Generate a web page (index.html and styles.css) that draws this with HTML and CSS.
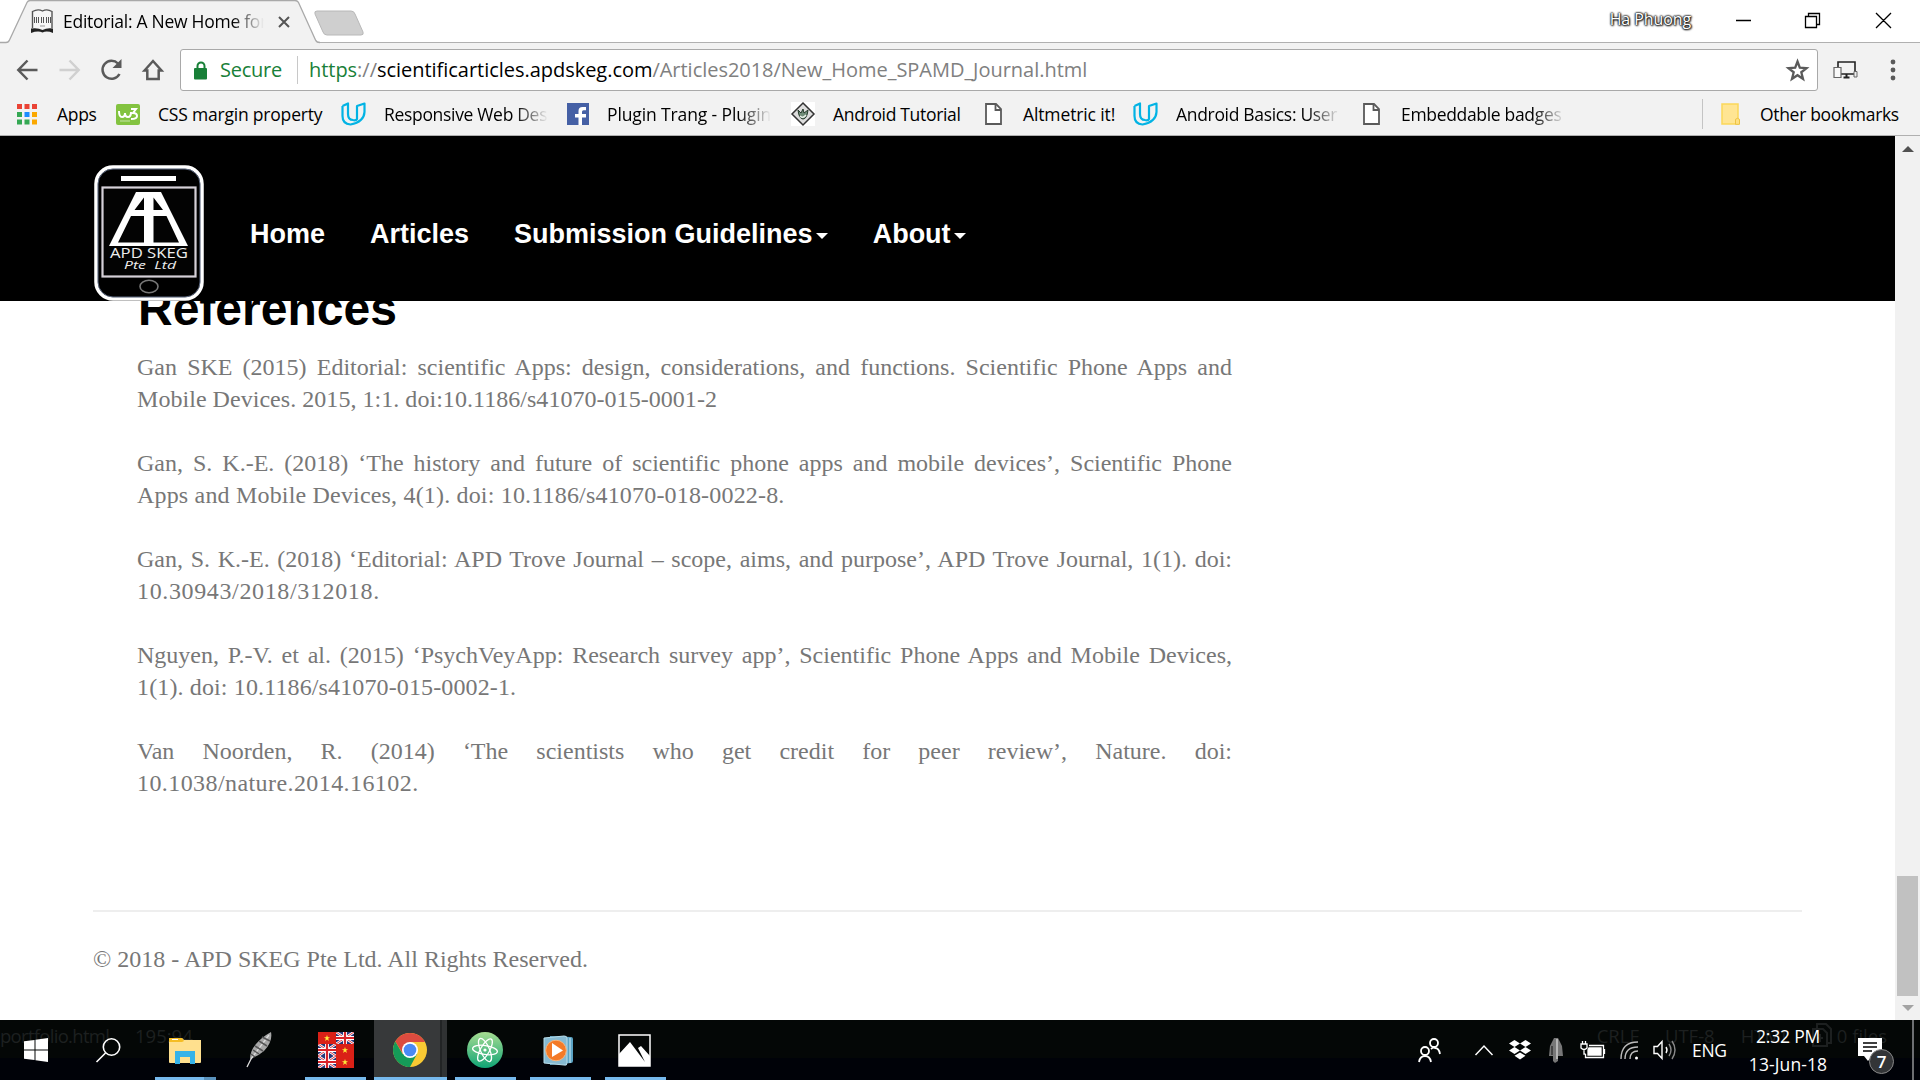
FILE: index.html
```html
<!DOCTYPE html>
<html lang="en">
<head>
<meta charset="utf-8">
<title>Editorial: A New Home for SPAMD</title>
<link rel="stylesheet" href="styles.css">
</head>
<body>
<svg width="0" height="0" class="defs">
  <symbol id="doc" viewBox="0 0 17 22"><path d="M1 1h10l5 5v15H1z" fill="#fff" stroke="#5a5a5a" stroke-width="1.8"/><path d="M10.5 1v6H16" fill="none" stroke="#5a5a5a" stroke-width="1.8"/></symbol>
  <symbol id="udacity" viewBox="0 0 25 24"><path d="M1.500 4 7 1.500V12q0 6 5 6M1.500 4v10q0 8 8 8.500Q23 20 23.500 10V1.500L16 4v13Q15 19 12 18" fill="none" stroke="#02b3e4" stroke-width="2.200" stroke-linejoin="round"/></symbol>
  <symbol id="uk" viewBox="0 0 18 12" preserveAspectRatio="none"><path d="M0 0h18v12H0z" fill="#24377b"/><path d="m0 0 18 12M18 0 0 12" stroke="#fff" stroke-width="2.600"/><path d="m0 0 18 12M18 0 0 12" stroke="#d8232a" stroke-width=".9"/><path d="M9 0v12M0 6h18" stroke="#fff" stroke-width="4"/><path d="M9 0v12M0 6h18" stroke="#d8232a" stroke-width="2.200"/></symbol>
  <symbol id="vn" viewBox="0 0 18 12"><path d="M0 0h18v12H0z" fill="#da2017"/><path d="m9 3 .8 2.200h2.300l-1.900 1.400.7 2.300L9 7.500 7.100 8.900l.7-2.300-1.900-1.400h2.300z" fill="#ffeb3b"/></symbol>
</svg>

<header class="chrome">
  <div class="titlebar">
    <div class="tab">
      <svg class="tab-shape" width="320" height="43" viewBox="0 0 320 43"><path d="M0 42.500H8L28 1.500Q28.500.5 30 .5H296Q297.500.5 298 1.500L317 42.500H320V43H0z" fill="#f2f2f2"/><path d="M0 42.500H6Q8.500 42.500 9.500 40L27 2.500Q28 .5 30 .5H295Q297.500.5 298.500 2.500L315.500 40Q316.500 42.500 320 42.500" fill="none" stroke="#a9a9a9" stroke-width="1.300"/></svg>
      <svg class="favicon" width="23" height="24" viewBox="0 0 23 24"><path d="M1.500 19V2.500Q7-.5 11.500 2 16-.5 21 2.500V19" fill="#f6f6f6" stroke="#555" stroke-width="1.400"/><path d="M0 19.500Q7 18.500 11.500 21 16 18.500 22 19.500V24Q16 21.500 11.500 23.500 7 21.500 0 24z" fill="#222"/><path d="M3.500 8v6m2-6v6m2-6v6m3-6v6m2-6v6m3-6v6m2-6v6m2-6v6" stroke="#555"/><path d="M9 17h5" stroke="#999"/></svg>
      <span class="tab-title fade">Editorial: A New Home for</span>
      <svg class="tab-close" width="12" height="12" viewBox="0 0 12 12"><path d="m1 1 10 10M11 1 1 11" stroke="#555" stroke-width="2"/></svg>
    </div>
    <svg class="newtab" width="52" height="27" viewBox="0 0 52 27"><path d="M3 1h34q3 0 4 3l8 18q1 3-2 3H13q-3 0-4-3L1 4Q0 1 3 1z" fill="#cfcfcf" stroke="#b8b8b8"/></svg>
    <span class="profile">Ha Phuong</span>
    <svg class="winctl" width="154" height="20" viewBox="0 0 154 20" fill="none" stroke="#000" stroke-width="1.300"><path d="M0 10.500h15M69.500 6.500h11v11h-11zM72.500 6.500v-3h11v11h-3M140 3l15 15M155 3l-15 15"/></svg>
  </div>
  <div class="toolbar">
    <svg class="navicons" width="150" height="26" viewBox="0 0 150 26" fill="none" stroke="#5a5a5a" stroke-width="2.500"><path d="M20.500 13H2M10.500 3.500 1.300 13 10.500 22.500"/><path d="M42.500 13h19M52.500 3.500 61.700 13 52.500 22.500" stroke="#d0d0d0"/><path d="M102.500 17A9 9 0 1 1 101 6.500"/><path d="M104.500 2v9h-9z" fill="#5a5a5a" stroke="none"/><path d="M127.500 13.500 136 4l8.500 9.500h-2.800V22h-11.400v-8.500z"/></svg>
    <div class="omnibox">
      <svg width="14" height="19" viewBox="0 0 14 19"><path d="M3.500 8V5a3.500 3.500 0 0 1 7 0v3" fill="none" stroke="#188038" stroke-width="2"/><rect y="7" width="13" height="11.500" rx="1" fill="#188038"/></svg>
      <span class="secure">Secure</span>
      <span class="url"><i class="scheme">https</i>://<b>scientificarticles.apdskeg.com</b>/Articles2018/New_Home_SPAMD_Journal.html</span>
      <svg class="star" width="23" height="22" viewBox="0 0 23 22"><path d="m11.500 2.500 2.300 6.200 6.700.4-5.200 4.200 1.700 6.500-5.500-3.600-5.500 3.600 1.700-6.500-5.200-4.200 6.700-.4z" fill="none" stroke="#5a5a5a" stroke-width="2.300"/></svg>
    </div>
    <svg class="device" width="25" height="20" viewBox="0 0 25 20" fill="none" stroke="#222" stroke-width="1.600"><path d="M5 7V2h17v12H8"/><path d="M13.500 14v3m-3 .5h6" stroke-width="2"/><path d="M1 7.500h7v10H1z" stroke="#666" fill="#fafafa" stroke-width="1.200"/><path d="M21 11.500h3v5.500h-3z" fill="#eee" stroke="#666"  stroke-width="1"/></svg>
    <svg class="menu" width="6" height="22" viewBox="0 0 6 22" fill="#5a5a5a"><circle cx="3" cy="3" r="2.400"/><circle cx="3" cy="11" r="2.400"/><circle cx="3" cy="19" r="2.400"/></svg>
  </div>
  <nav class="bookmarks">
    <a class="bm"><svg width="22" height="21" viewBox="0 0 22 21"><path d="M0 0h5v5H0zm7.500 0h5v5h-5zM15 0h5v5h-5z" fill="#ea4335"/><path d="M0 8h5v5H0zm0 7.500h5v5H0zm7.500 0h5v5h-5z" fill="#34a853"/><path d="M7.500 8h5v5h-5z" fill="#1a8cff"/><path d="M15 8h5v5h-5zm0 7.500h5v5h-5z" fill="#fba800"/></svg><span>Apps</span></a>
    <a class="bm"><svg width="24" height="21" viewBox="0 0 24 21"><rect width="24" height="21" rx="2" fill="#83c340"/><path d="M3 7q0 6 3 6t3-4q0 4 3 4t3-5m0-3h5l-3 4q4 0 4 3t-6 3" fill="none" stroke="#fff" stroke-width="2"/><path d="M4 17h10" stroke="#c8e6a8"/></svg><span class="css">CSS margin property</span></a>
    <a class="bm"><svg width="25" height="24"><use href="#udacity"/></svg><span class="fade">Responsive Web Design</span></a>
    <a class="bm"><svg width="22" height="22" viewBox="0 0 22 22"><path d="M0 0h22v22H0z" fill="#4560a5"/><path d="M11.500 22v-7.500H8V11h3.500V8q0-4 4-4H19v3.200h-2.500q-1.500 0-1.500 1.500V11h4v3.500h-4V22z" fill="#fff"/></svg><span class="fade fb">Plugin Trang - Plugin cho</span></a>
    <a class="bm"><svg width="24" height="24" viewBox="0 0 24 24"><path d="M0 0h24v24H0z" fill="#fff"/><path d="M12 1 23 12 12 23 1 12z" fill="#ddd" stroke="#333" stroke-width="1.500"/><path d="M7 8q1 9 5 9t5-9l-4 3-1-4-2 4z" fill="#6f8c77" stroke="#263a2b"/><path d="M9 14q3 3 6-1" fill="none" stroke="#e8f0e8" stroke-width="1.500"/></svg><span>Android Tutorial</span></a>
    <a class="bm d"><svg width="17" height="22"><use href="#doc"/></svg><span class="alt">Altmetric it!</span></a>
    <a class="bm"><svg width="25" height="24"><use href="#udacity"/></svg><span class="fade">Android Basics: User Int</span></a>
    <a class="bm d"><svg width="17" height="22"><use href="#doc"/></svg><span class="fade">Embeddable badges for</span></a>
    <a class="bm other"><svg width="20" height="22" viewBox="0 0 20 22"><path d="M1 1h16v20H1z" fill="#ffe593" stroke="#fbd75a" stroke-width="1.500"/><path d="M14.500 21.300v-5q2-2 4 0v5z" fill="#ffe082" stroke="#edc343"/></svg><span>Other bookmarks</span></a>
  </nav>
</header>

<div class="viewport">
  <div class="page">
    <div class="site-header">
      <svg class="logo" width="110" height="136" viewBox="0 0 110 136">
        <rect x="2" y="2" width="106" height="132" rx="17" fill="#000" stroke="#fff" stroke-width="3.500"/>
        <rect x="4" y="4" width="102" height="128" rx="15" fill="none" stroke="#7786a5" stroke-width=".8"/>
        <path d="M27 11h55v5H27z" fill="#fff"/>
        <rect x="8.500" y="22.500" width="93" height="89" fill="#030303" stroke="#d5d0d8" stroke-width="2.200"/>
        <path fill="#fff" fill-rule="evenodd" d="M42 27h25l27 54H15zM50 32.500 40.500 45H50zM59.500 32.500V45H69zM37 51 24 77.500h26V51zM59.500 51v26.500H85L72.500 51z"/>
        <text x="16" y="92.500" textLength="78" lengthAdjust="spacingAndGlyphs" font-size="14.500">APD SKEG</text>
        <text x="30" y="104" textLength="52" lengthAdjust="spacingAndGlyphs" font-size="11" font-style="italic">Pte&#160; Ltd</text>
        <ellipse cx="55" cy="121.500" rx="9" ry="6.200" fill="none" stroke="#777" stroke-width="1.600"/>
      </svg>
      <nav class="site-nav"><a>Home</a><a>Articles</a><a>Submission Guidelines<i class="caret"></i></a><a>About<i class="caret"></i></a></nav>
    </div>
    <main class="article">
      <h2>References</h2>
      <p><span class="full">Gan SKE (2015) Editorial: scientific Apps: design, considerations, and functions. Scientific Phone Apps and</span><span class="last gan-2015">Mobile Devices. 2015, 1:1. doi:10.1186/s41070-015-0001-2</span></p>
      <p><span class="full">Gan, S. K.-E. (2018) ‘The history and future of scientific phone apps and mobile devices’, Scientific Phone</span><span class="last history">Apps and Mobile Devices, 4(1). doi: 10.1186/s41070-018-0022-8.</span></p>
      <p><span class="full">Gan, S. K.-E. (2018) ‘Editorial: APD Trove Journal – scope, aims, and purpose’, APD Trove Journal, 1(1). doi:</span><span class="last trove">10.30943/2018/312018.</span></p>
      <p><span class="full">Nguyen, P.-V. et al. (2015) ‘PsychVeyApp: Research survey app’, Scientific Phone Apps and Mobile Devices,</span><span class="last nguyen">1(1). doi: 10.1186/s41070-015-0002-1.</span></p>
      <p><span class="full">Van Noorden, R. (2014) ‘The scientists who get credit for peer review’, Nature. doi:</span><span class="last noorden">10.1038/nature.2014.16102.</span></p>
    </main>
    <footer class="site-footer">© 2018 - APD SKEG Pte Ltd. All Rights Reserved.</footer>
  </div>
  <div class="scrollbar"><i class="up"></i><i class="thumb"></i><i class="down"></i></div>
</div>

<div class="taskbar">
  <div class="ghost"><span>portfolio.html</span><span>195:94</span><span class="g-right">CRLF</span><span>UTF-8</span><span>HTML</span><svg width="20" height="24" viewBox="0 0 20 24" fill="none" stroke="#1d2020" stroke-width="2"><path d="M1 6h10l4 4v13H1zM5 6V1h9l5 5v14h-4M8 11v8m-3-4h6"/></svg><span>0 files</span></div>
  <div class="apps">
    <div class="app start"><svg width="24" height="24" viewBox="0 0 24 24" fill="#fff"><path d="M0 3.300 10.500 2v9.500H0zM11.500 1.800 24 0v11.500H11.500zM0 12.500h10.500V22L0 20.700zM11.500 12.500H24V24l-12.500-1.800z"/></svg></div>
    <div class="app search"><svg width="25" height="25" viewBox="0 0 25 25" fill="none" stroke="#fff" stroke-width="1.600"><circle cx="15.500" cy="9" r="8.200"/><path d="M9.500 15 .5 24"/></svg></div>
    <div class="app open split"><svg width="32" height="27" viewBox="0 0 32 27"><path d="M0 2q0-1 1-1h12l2 2h17v22q0 1-1 1H1q-1 0-1-1z" fill="#ffe08e"/><path d="M1 1h12l2 3-2 1H0V2z" fill="#f5bd24"/><path d="M3 2.500h6" stroke="#fff"/><path d="M6 27V14h20v13h-5v-7H11v7z" fill="#36b3e8"/></svg></div>
    <div class="app quill"><svg width="26" height="36" viewBox="0 0 26 36"><path d="M25 0q2 10-7 19-6 5-12 7l-2 1q0-8 6-15T25 0z" fill="#a7a7a7"/><path d="M23 3 5 27 1 35" fill="none" stroke="#ddd" stroke-width="1.300"/><path d="m7 18 6 4M9 14l8 5M13 9l8 5m-5-9 8 4M5 22l4 3" stroke="#565656" stroke-width="1.500"/></svg></div>
    <div class="app open"><svg width="36" height="36" viewBox="0 0 36 36"><use href="#vn" width="18" height="12"/><use href="#uk" x="18" width="18" height="12"/><use href="#uk" y="12" width="18" height="12"/><use href="#vn" x="18" y="12" width="18" height="12"/><use href="#uk" y="24" width="18" height="12"/><use href="#vn" x="18" y="24" width="18" height="12"/></svg></div>
    <div class="app open active"><svg width="34" height="34" viewBox="0 0 34 34"><circle cx="17" cy="17" r="17" fill="#f8c933"/><path d="M2.300 8.500A17 17 0 0 1 31.700 8.500L32 9H17L10 21z" fill="#db4b3f"/><path d="M2.300 8.500A17 17 0 0 0 17 34l7-13-14.400 0z" fill="#159b58"/><circle cx="17" cy="17" r="8" fill="#fff"/><circle cx="17" cy="17" r="6.300" fill="#4a8af4"/></svg></div>
    <div class="app open nudge"><svg width="36" height="36" viewBox="0 0 36 36"><defs><linearGradient id="atom" x2="0" y2="1"><stop stop-color="#a7dc91"/><stop offset="1" stop-color="#10a576"/></linearGradient></defs><circle cx="18" cy="18" r="18" fill="url(#atom)"/><g fill="none" stroke="#fff" stroke-width="1.300"><ellipse cx="18" cy="18" rx="12.500" ry="4.500" transform="rotate(8 18 18)"/><ellipse cx="18" cy="18" rx="12.500" ry="4.500" transform="rotate(66 18 18)"/><ellipse cx="18" cy="18" rx="12.500" ry="4.500" transform="rotate(120 18 18)"/></g><circle cx="18" cy="18" r="1.600" fill="#fff"/></svg></div>
    <div class="app open quill"><svg width="30" height="31" viewBox="0 0 30 31"><path d="m6 1 21 1q2 0 2 2v22q0 2-2 2L6 30z" fill="#5ba3c4"/><path d="M26 3v25" stroke="#d5edf7"/><path d="m0 3 20-2q3 0 3 2v25q0 3-3 2L0 28z" fill="#86bad2" stroke="#b9ddea"/><circle cx="12" cy="15.500" r="10.300" fill="#f47a27" stroke="#f9b47a"/><path d="m8 8 11 7.500L8 22z" fill="#fff"/></svg></div>
    <div class="app open nudge"><svg width="33" height="33" viewBox="0 0 33 33"><path d="M1 1h31v31H1z" fill="none" stroke="#fff" stroke-width="1.500"/><path d="M1 20 12 8l15 20-7-14 3-2 9 10v10H1z" fill="#fff"/></svg></div>
  </div>
  <div class="tray">
    <svg width="24" height="24" viewBox="0 0 24 24" fill="none" stroke="#fff" stroke-width="1.800"><circle cx="16" cy="5" r="4"/><circle cx="7" cy="13" r="4"/><path d="M1 24q1-6 6-6t6 6M13 11q2-2 4-1 4 0 5 6"/></svg>
    <svg class="t-caret" width="18" height="12" viewBox="0 0 18 12"><path d="m.5 11 8.500-9 8.500 9" fill="none" stroke="#fff" stroke-width="1.500"/></svg>
    <svg class="t-drop" width="22" height="20" viewBox="0 0 22 20" fill="#fff"><path d="m5.500 0 5.500 3.500L5.500 7 0 3.500zM16.500 0 22 3.500 16.500 7 11 3.500zM5.500 7 11 10.500 5.500 14 0 10.500zM16.500 7 22 10.500 16.500 14 11 10.500zM11 12.500l5.500 3.300L11 19.500l-5.500-3.700z"/></svg>
    <svg class="t-pen" width="14" height="25" viewBox="0 0 14 25"><path d="M5 0h4l4 8 1 10H9v5l-3 2-2-2v-5H0L1 8z" fill="#777"/><path d="M8 1v20" stroke="#b5b5b5" stroke-width="2"/><path d="M3 8v9" stroke="#444" stroke-width="2"/></svg>
    <svg class="t-bat" width="25" height="18" viewBox="0 0 25 18" fill="none" stroke="#fff" stroke-width="1.300"><path d="M9 4.500h14.500v12H5.500V13M24.500 8v5M1 3h6v4q-3 3-6 0zM2.500 0v3m3-3v3M4 9v4h1.500"/><path d="M9 7h12v7H8V9z" fill="#fff"/></svg>
    <svg class="t-wifi" width="19" height="19" viewBox="0 0 19 19" fill="none" stroke="#bbb" stroke-width="1.400"><path d="M1 18Q1 1 18 1M5 18Q5 6 18 6M10 18q0-8 8-8"/><circle cx="16.500" cy="17" r="1.500" fill="#fff" stroke="none"/></svg>
    <svg class="t-vol" width="23" height="20" viewBox="0 0 23 20" fill="none" stroke="#fff" stroke-width="1.400"><path d="M1 6.500h3.500L9 1.500v17l-4.500-5H1zM13 7q2 3 0 6"/><path d="M16 4q4 6 0 12M19 1q6 9 0 18" stroke="#888"/></svg>
    <span class="lang">ENG</span>
    <div class="clock"><span>2:32 PM</span><span class="date">13-Jun-18</span></div>
    <svg class="t-note" width="38" height="38" viewBox="0 0 38 38"><path d="M0 1h24v18H14l-4 5-4-5H0z" fill="#fff"/><path d="M5 6h14M5 10h14M5 14h9" stroke="#000" stroke-width="1.400"/><circle cx="23.500" cy="24.500" r="12" fill="#333537" stroke="#888"/><text x="23.500" y="30.500" text-anchor="middle" font-size="17" font-weight="600">7</text></svg>
    <i class="peek"></i>
  </div>
</div>
</body>
</html>
```
FILE: styles.css
```css
* { box-sizing: border-box; }
body { margin: 0; width: 1920px; height: 1080px; overflow: hidden; background: #fff; font-family: "Open Sans", "Noto Sans", sans-serif; font-size: 17.5px; letter-spacing: -.32px; color: #000; display: flex; flex-direction: column; }
svg { flex: none; display: block; overflow: visible; }
i { font-style: normal; }
.defs { position: absolute; }
.fade { overflow: hidden; white-space: nowrap; -webkit-mask-image: linear-gradient(to left, transparent, #000 32px); mask-image: linear-gradient(to left, transparent, #000 32px); }

/* browser frame */
.chrome { height: 136px; flex: none; background: #f2f2f2; border-bottom: 1px solid #b0b0b0; }
.titlebar { height: 43px; background: #fff; border-bottom: 1px solid #b0b0b0; display: flex; align-items: flex-start; }
.tab { width: 320px; height: 43px; position: relative; display: flex; align-items: flex-start; padding-left: 31px; flex: none; }
.tab-shape { position: absolute; left: 0; top: 0; }
.favicon, .tab-title, .tab-close { position: relative; }
.favicon { margin-top: 9px; }
.tab-title { width: 201px; margin: 9px 0 0 9px; line-height: 24px; letter-spacing: -.27px; }
.tab-close { margin: 16px 0 0 14px; }
.newtab { margin: 10px 0 0 -6px; }
.profile { margin: 7px 0 0 auto; font-size: 16px; line-height: 24px; color: #fff; letter-spacing: -.1px; text-shadow: 0 0 2px #000, 0 0 2px #000, 0 0 2px #222, 1px 1px 2px #333; }
.winctl { margin: 10px 30px 0 45px; }
.toolbar { height: 54px; padding: 6px 24px 6px 17px; display: flex; align-items: center; }
.navicons { margin-right: 13px; }
.omnibox { width: 1638px; height: 42px; background: #fff; border: 1.500px solid #a9a9a9; border-radius: 3px; display: flex; align-items: center; padding: 0 8px 0 13px; font-size: 20px; line-height: 28px; letter-spacing: -.25px; }
.secure { color: #188038; margin-left: 12px; padding-right: 15px; border-right: 1px solid #c8c8c8; }
.url { margin-left: 11px; color: #808080; letter-spacing: -.03px; }
.url b { font-weight: 400; color: #000; }
.scheme { color: #188038; }
.star { margin-left: auto; }
.device { margin-left: 15px; }
.menu { margin-left: auto; }
.bookmarks { height: 36px; padding: 0 22px 0 17px; display: grid; grid-template-columns: 99px 225px 226px 224px 194px 148px 230px 339px 1fr; align-items: center; line-height: 24px; margin-top: -1px; }
.bm { display: flex; align-items: center; gap: 18px; white-space: nowrap; height: 34px; }
.bm.d { gap: 21px; }
.bm .fade { width: 164px; }
.css { letter-spacing: -.2px; }
.alt { letter-spacing: -.12px; }
.fb { letter-spacing: -.12px; }
.other { border-left: 1px solid #c4c4c4; padding-left: 18px; height: 30px; gap: 19px; }

/* web page */
.viewport { height: 884px; flex: none; display: flex; }
.page { width: 1895px; overflow: hidden; }
.site-header { height: 165px; background: #000; padding: 29px 0 0 94px; display: flex; align-items: flex-start; position: relative; z-index: 1; }
.logo text { fill: #eee; font-family: "Open Sans", sans-serif; letter-spacing: 0; }
.site-nav { display: flex; margin: 50px 0 0 23.500px; font: bold 27px/38px "Liberation Sans", Arial, sans-serif; letter-spacing: 0; color: #fff; }
.site-nav a { padding: 0 22.500px; display: flex; align-items: center; }
.caret { border: 6px solid transparent; border-top-color: #fff; border-bottom: 0; margin: 3px 0 0 3px; }
.article { width: 1095px; margin: -19px 0 0 137px; font-family: "Liberation Serif", Georgia, serif; font-size: 24px; line-height: 32px; color: #777; letter-spacing: 0; }
h2 { margin: 0 0 0 1px; font: bold 48px/53px "Liberation Sans", Arial, sans-serif; color: #000; }
.article p { margin: 0 0 32px; }
.article h2 + p { margin-top: 16px; }
.full { display: block; text-align: justify; text-align-last: justify; white-space: nowrap; }
.last { display: block; }
.gan-2015 { letter-spacing: .04px; }
.history { letter-spacing: .18px; }
.trove { letter-spacing: .64px; }
.nguyen { letter-spacing: .13px; }
.noorden { letter-spacing: .42px; }
.site-footer { width: 1709px; margin: 111px 0 0 93px; padding-top: 31px; border-top: 2px solid #eee; font: 24px/32px "Liberation Serif", Georgia, serif; color: #777; letter-spacing: 0; }
.scrollbar { width: 25px; background: #f1f1f1; display: flex; flex-direction: column; align-items: center; }
.up { border: 6px solid transparent; border-top: 0; border-bottom-color: #505050; margin-top: 10px; }
.thumb { width: 21px; height: 120px; background: #c1c1c1; margin-top: 724px; }
.down { border: 6px solid transparent; border-bottom: 0; border-top-color: #a3a3a3; margin-top: 9px; }

/* taskbar */
.taskbar { height: 60px; flex: none; position: relative; background: linear-gradient(#040706 38px, #000208 38px); display: flex; justify-content: space-between; color: #fff; }
.ghost { position: absolute; inset: 0; display: flex; gap: 26px; padding: 3px 33px 0 0; color: #1d2020; font-size: 18.500px; line-height: 26px; letter-spacing: 0; }
.g-right { margin-left: auto; }
.ghost span:first-child { width: 109px; letter-spacing: -.7px; }
.ghost svg { margin: 0 -21px 0 -5px; }
.apps { display: flex; position: relative; }
.app { width: 61px; margin-right: 14px; height: 60px; display: flex; align-items: center; justify-content: center; border-bottom: 3px solid transparent; padding-top: 3px; }
.open { border-color: #76b9ed; }
.start { width: 72px; margin: 0; }
.search { width: 72px; margin: 0 11px 0 0; }
.quill { padding-right: 4px; }
.nudge { padding-right: 2px; }
.split { border-image: linear-gradient(90deg, #76b9ed 47px, #5a92bd 47px) 3; border-width: 0 0 3px; padding-right: 1px; }
.active { width: 73px; margin: 0 8px 0 -6px; padding-right: 2px; background: linear-gradient(90deg, #37393a 66px, #222425 66px 68px, #303233 68px); }
.tray { display: flex; align-items: center; position: relative; }
.t-caret { margin-left: 33px; }
.t-drop { margin-left: 16px; }
.t-pen { margin-left: 18px; }
.t-bat { margin-left: 17px; }
.t-wifi { margin-left: 15px; }
.t-vol { margin-left: 14px; }
.lang { margin-left: 16px; width: 35px; font-size: 17.500px; }
.clock { width: 84px; margin: 0 28px 0 19px; display: flex; flex-direction: column; align-items: center; font-size: 17.500px; line-height: 28px; letter-spacing: -.2px; white-space: nowrap; }
.date { letter-spacing: .1px; }
.t-note { margin-top: 12px; }
.t-note text { fill: #fff; font-family: "Open Sans", sans-serif; }
.peek { width: 2px; height: 60px; background: #6d6f72; margin: 0 6px 0 16px; }
```
